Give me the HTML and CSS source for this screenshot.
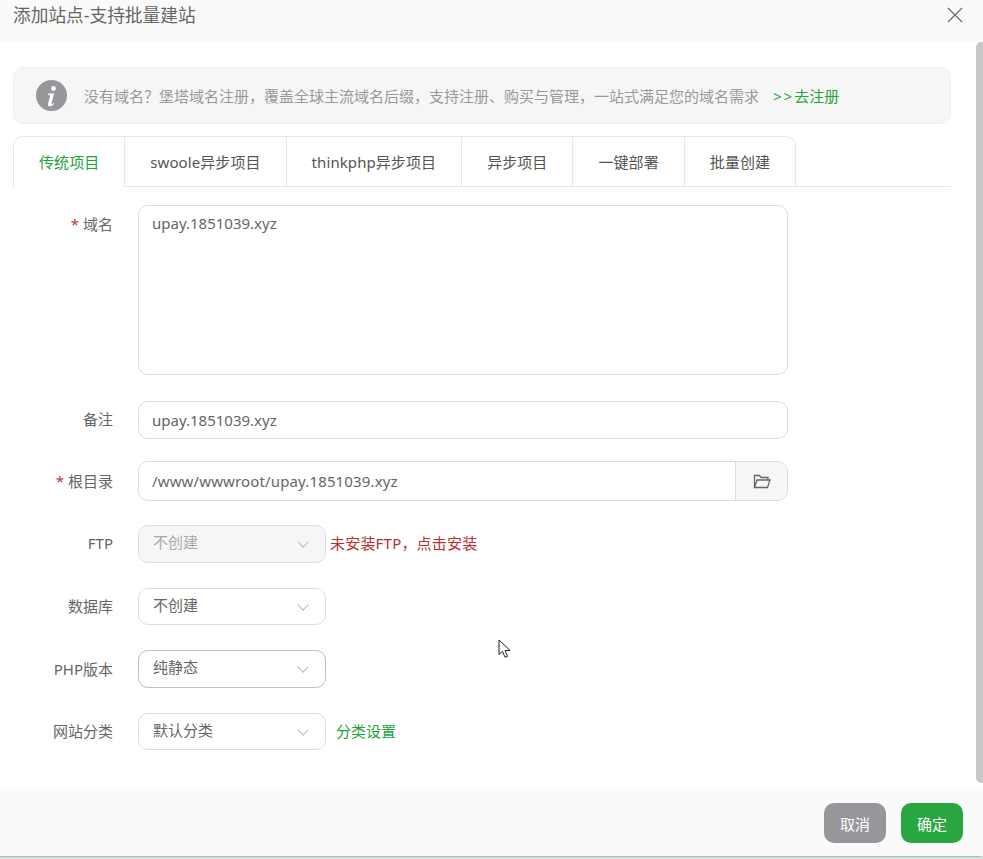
FILE: index.html
```html
<!DOCTYPE html>
<html>

<head>
    <meta http-equiv="content-type" content="text/html; charset=utf-8" />
    <title>添加站点</title>
    <link rel="stylesheet" href="styles.css">
</head>

<body>
    <div class="layer">
        <div class="layer-title">
            <span>添加站点-支持批量建站</span>
            <svg class="layer-close" width="16" height="16" viewBox="0 0 16 16">
                <path d="M1 1L15 15M15 1L1 15" stroke="#666" stroke-width="1.2" fill="none" />
            </svg>
        </div>

        <div class="layer-body">
            <div class="notice">
                <svg class="notice-icon" width="31" height="31" viewBox="0 0 31 31">
                    <circle cx="15.5" cy="15.5" r="15.5" fill="#97979b" />
                    <circle cx="17.5" cy="8.5" r="2.4" fill="#fff" />
                    <path d="M12.5 13.5h5.6l-2.6 10c-.2.8.5 1 1.8-.4l.7.6c-1.6 2.2-3.2 2.8-4.4 2.6-1.400-.2-1.800-1.300-1.500-2.600l2-8.200-1.800-.4z" fill="#fff" />
                </svg>
                <span class="notice-text">没有域名？堡塔域名注册，覆盖全球主流域名后缀，支持注册、购买与管理，一站式满足您的域名需求</span>
                <a class="link notice-link"><span class="arrows">&gt;&gt;</span>去注册</a>
            </div>

            <div class="tabs">
                <div class="tab active">传统项目</div>
                <div class="tab">swoole异步项目</div>
                <div class="tab">thinkphp异步项目</div>
                <div class="tab">异步项目</div>
                <div class="tab">一键部署</div>
                <div class="tab">批量创建</div>
            </div>

            <div class="form">
                <div class="row row-area">
                    <label class="label"><i>*</i> 域名</label>
                    <div class="textarea">upay.1851039.xyz</div>
                </div>
                <div class="row row-note">
                    <label class="label">备注</label>
                    <div class="input">upay.1851039.xyz</div>
                </div>
                <div class="row row-path">
                    <label class="label"><i>*</i> 根目录</label>
                    <div class="input-group">
                        <div class="input-path">/www/wwwroot/upay.1851039.xyz</div>
                        <div class="input-btn">
                            <svg width="18" height="15" viewBox="0 0 18 15" fill="none" stroke="#666" stroke-width="1.300">
                                <path d="M1.500 13.500V1.500h5l1.500 2h7v2.500" />
                                <path d="M1.500 13.500l2.500-7.500h13l-2.500 7.500z" />
                            </svg>
                        </div>
                    </div>
                </div>
                <div class="row row-ftp">
                    <label class="label">FTP</label>
                    <div class="select disabled">不创建<span class="caret"></span></div>
                    <a class="warn">未安装FTP，点击安装</a>
                </div>
                <div class="row row-db">
                    <label class="label">数据库</label>
                    <div class="select">不创建<span class="caret"></span></div>
                </div>
                <div class="row row-php">
                    <label class="label">PHP版本</label>
                    <div class="select focus">纯静态<span class="caret"></span></div>
                </div>
                <div class="row row-cat">
                    <label class="label">网站分类</label>
                    <div class="select">默认分类<span class="caret"></span></div>
                    <a class="link cat-link">分类设置</a>
                </div>
            </div>
            <div class="scrollbar"></div>
        </div>

        <div class="layer-footer">
            <button class="btn btn-grey">取消</button>
            <button class="btn btn-green">确定</button>
        </div>
    </div>

    <!-- мышь на скриншоте -->
    <svg class="cursor" width="14" height="20" viewBox="0 0 14 20">
        <path d="M1 1v14.500l3.500-3.200 2.500 6 2.600-1-2.500-5.800h5z" fill="#fff" stroke="#222" stroke-width="1" />
    </svg>
</body>

</html>
```

FILE: styles.css
```css
* {
    box-sizing: border-box;
}

html,
body {
    margin: 0;
    height: 100%;
}

body {
    background: #cfe2e0;
    font-family: "Noto Sans", "Noto Sans CJK SC", sans-serif;
    font-size: 15px;
    color: #666;
    overflow: hidden;
}

.layer {
    display: flex;
    flex-direction: column;
    height: 857px;
    background: #fff;
    border-bottom: 1px solid #a9b9b6;
    border-bottom-right-radius: 4px;
}

.layer-title {
    flex: 0 0 42px;
    display: flex;
    justify-content: space-between;
    padding: 5px 20px 0 13px;
    background: #f9faf9;
    font-size: 17.700px;
    line-height: 20px;
    color: #666;
}

.layer-close {
    margin-top: 2px;
}

.layer-body {
    position: relative;
    flex: 1;
    padding: 25px 32px 0 13px;
}

.scrollbar {
    position: absolute;
    top: 0;
    right: 0;
    width: 7px;
    height: 741px;
    background: #c8c8c8;
    border-radius: 5px 0 0 5px;
}

.notice {
    display: flex;
    align-items: center;
    height: 57px;
    padding: 0 0 1px 22px;
    background: #f6f6f6;
    border: 1px solid #f0f0f0;
    border-radius: 10px;
}

.notice-icon {
    flex: none;
    margin-right: 17px;
}

.notice-text {
    color: #999;
}

.notice-link {
    margin-left: 14px;
}

.arrows {
    letter-spacing: 2px;
}

.link {
    color: #20a53a;
}

.tabs {
    display: flex;
    height: 51px;
    margin-top: 12px;
    border-bottom: 1px solid #e8e8e8;
}

.tab {
    padding: 0 25px;
    line-height: 50px;
    letter-spacing: 0.08px;
    color: #555;
    border: 1px solid #e8e8e8;
    border-left: 0;
    border-bottom: 0;
}

.tab:first-child {
    border-left: 1px solid #e8e8e8;
    border-top-left-radius: 10px;
}

.tab:last-child {
    border-top-right-radius: 10px;
}

.tab.active {
    height: 51px;
    color: #20a53a;
    background: #fff;
}

.row {
    display: flex;
    align-items: center;
}

.row-area {
    align-items: flex-start;
    margin-top: 18px;
}

.row-note {
    margin-top: 26px;
}

.row-path {
    margin-top: 22px;
}

.row-ftp {
    margin-top: 24px;
}

.row-db {
    margin-top: 25px;
}

.row-php {
    margin-top: 25px;
}

.row-cat {
    margin-top: 25px;
}

.label {
    flex: 0 0 100px;
    margin-right: 25px;
    padding-bottom: 2px;
    text-align: right;
    color: #666;
}

.label i {
    font-style: normal;
    color: #c7383e;
}

.row-area .label {
    padding-top: 8px;
}

.row-note .label {
    padding-bottom: 4px;
}

.textarea,
.input,
.input-group {
    width: 650px;
    border: 1px solid #ddd;
    border-radius: 10px;
    color: #666;
}

.textarea {
    height: 170px;
    padding: 7px 13px;
}

.input {
    height: 38px;
    padding: 0 13px;
    line-height: 36px;
}

.input-group {
    display: flex;
    height: 40px;
    line-height: 38px;
}

.input-path {
    flex: 1;
    padding: 0 13px;
    letter-spacing: 0.14px;
}

.input-btn {
    display: flex;
    align-items: center;
    justify-content: center;
    width: 52px;
    background: #f6f6f6;
    border-left: 1px solid #ddd;
    border-radius: 0 10px 10px 0;
}

.select {
    position: relative;
    width: 188px;
    height: 37px;
    padding: 0 14px;
    line-height: 33px;
    color: #666;
    border: 1px solid #ddd;
    border-radius: 10px;
    background: #fff;
}

.select.disabled {
    height: 38px;
    color: #aaa;
    background: #f6f6f6;
}

.select.focus {
    height: 38px;
    border-color: #c0c0c0;
}

.caret {
    position: absolute;
    top: 12px;
    right: 18px;
    width: 8px;
    height: 8px;
    border-right: 1px solid #bbb;
    border-bottom: 1px solid #bbb;
    transform: rotate(45deg);
}

.warn {
    margin-left: 4px;
    padding-bottom: 4px;
    letter-spacing: 0.2px;
    color: #b8312f;
}

.cat-link {
    margin-left: 10px;
    padding-bottom: 3px;
}

.layer-footer {
    flex: 0 0 65px;
    display: flex;
    justify-content: flex-end;
    gap: 15px;
    padding: 12px 20px 0 0;
    background: #f9faf9;
}

.btn {
    width: 62px;
    height: 40px;
    padding: 0;
    border: 0;
    border-radius: 10px;
    color: #fff;
    font: inherit;
}

.btn-grey {
    background: #97979b;
}

.btn-green {
    background: #28a640;
}

.cursor {
    position: absolute;
    left: 498px;
    top: 639px;
}
```
